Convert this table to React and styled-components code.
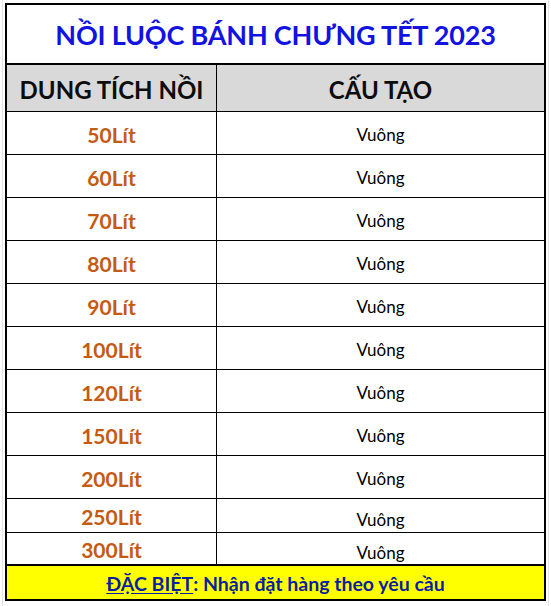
import React from "react";
import styled, { createGlobalStyle } from "styled-components";

const GlobalStyle = createGlobalStyle`
  html, body {
    margin: 0;
    padding: 0;
    background: #ffffff;
  }
  body {
    font-family: Lato, "Open Sans", "Liberation Sans", sans-serif;
  }
`;

// Excel-like sheet area behind the table
const Sheet = styled.div`
  width: 551px;
  height: 606px;
  padding: 3px 0 0 5px;
  box-sizing: border-box;
  background:
    linear-gradient(#e3e3e3, #e3e3e3) 548px 0 / 1px 100% no-repeat,
    linear-gradient(#e3e3e3, #e3e3e3) 2px 0 / 1px 100% no-repeat;
`;

const Table = styled.div`
  width: 541px;
  border: 2px solid #000;
  box-sizing: border-box;
  display: grid;
  grid-template-columns: 210px 1fr;
  background: #fff;
`;

const TitleCell = styled.div`
  grid-column: 1 / -1;
  height: 57px;
  border-bottom: 2px solid #000;
  display: flex;
  align-items: center;
  justify-content: center;
  color: #1212e2;
  font-weight: 700;
  font-size: 27px;
  letter-spacing: -0.2px;
  padding-top: 1px;
  box-sizing: content-box;
`;

const HeadCell = styled.div`
  height: 47px;
  background: #d9d9d9;
  border-bottom: 1px solid #000;
  border-right: ${({ last }) => (last ? "none" : "1px solid #000")};
  display: flex;
  align-items: center;
  justify-content: center;
  font-weight: 700;
  font-size: 24px;
  color: #0d0d0d;
  padding-top: 2px;
  box-sizing: border-box;
`;

const SizeCell = styled.div`
  height: ${({ h }) => h}px;
  border-bottom: ${({ noLine }) => (noLine ? "none" : "1px solid #000")};
  border-right: 1px solid #000;
  box-sizing: border-box;
  display: flex;
  align-items: center;
  justify-content: center;
  color: #c55a11;
  font-weight: 700;
  font-size: 21px;
  padding-top: 2px;
`;

const ShapeCell = styled.div`
  height: ${({ h }) => h}px;
  border-bottom: ${({ noLine }) => (noLine ? "none" : "1px solid #000")};
  box-sizing: border-box;
  display: flex;
  align-items: center;
  justify-content: center;
  color: #000;
  font-size: 17px;
  padding-top: ${({ low }) => (low ? 8 : 2)}px;
`;

const Note = styled.div`
  grid-column: 1 / -1;
  height: 35px;
  border-top: 2px solid #000;
  background: #ffff00;
  display: flex;
  align-items: center;
  justify-content: center;
  color: #0a1fa0;
  font-weight: 700;
  font-size: 19.5px;
  box-sizing: border-box;
  padding-top: 1px;
`;

const Underlined = styled.span`
  text-decoration: underline;
  text-underline-offset: 2px;
`;

const rows = [
  { size: "50Lít", h: 43 },
  { size: "60Lít", h: 43 },
  { size: "70Lít", h: 43 },
  { size: "80Lít", h: 43 },
  { size: "90Lít", h: 43 },
  { size: "100Lít", h: 43 },
  { size: "120Lít", h: 43 },
  { size: "150Lít", h: 43 },
  { size: "200Lít", h: 43 },
  { size: "250Lít", h: 34, low: true },
  { size: "300Lít", h: 31, low: true, noLine: true },
];

export default function App() {
  return (
    <>
      <GlobalStyle />
      <Sheet>
        <Table>
          <TitleCell>NỒI LUỘC BÁNH CHƯNG TẾT 2023</TitleCell>
          <HeadCell>DUNG TÍCH NỒI</HeadCell>
          <HeadCell last>CẤU TẠO</HeadCell>
          {rows.map((r) => (
            <React.Fragment key={r.size}>
              <SizeCell h={r.h} noLine={r.noLine}>
                {r.size}
              </SizeCell>
              <ShapeCell h={r.h} low={r.low} noLine={r.noLine}>
                Vuông
              </ShapeCell>
            </React.Fragment>
          ))}
          <Note>
            <Underlined>ĐẶC BIỆT</Underlined>: Nhận đặt hàng theo yêu cầu
          </Note>
        </Table>
      </Sheet>
    </>
  );
}
